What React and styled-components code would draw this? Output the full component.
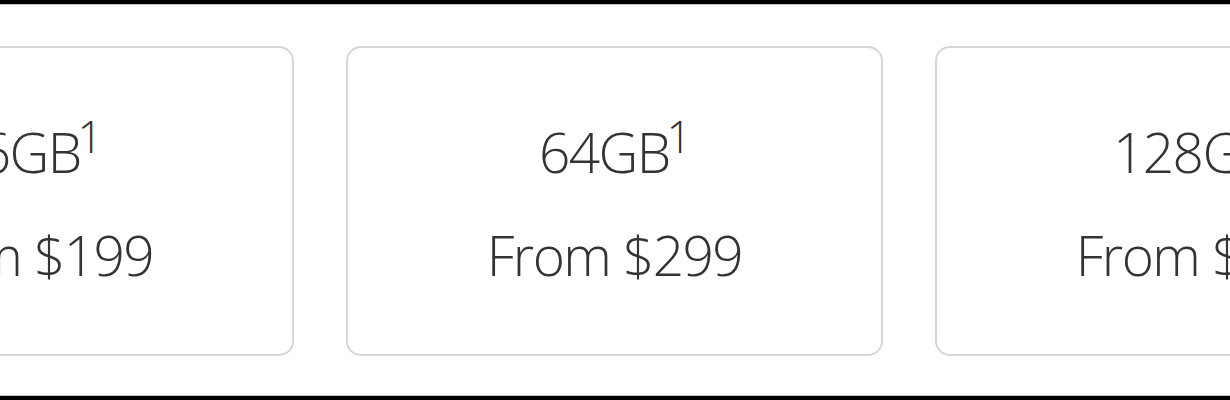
import React from "react";
import styled, { createGlobalStyle } from "styled-components";

const Global = createGlobalStyle`
  html, body { margin: 0; padding: 0; background: #fff; }
  body { width: 1230px; height: 400px; overflow: hidden; }
`;

const Frame = styled.div`
  height: 400px;
  box-sizing: border-box;
  border-top: 4px solid #000;
  border-bottom: 4px solid #000;
  overflow: hidden;
`;

const Inner = styled.div`
  height: 100%;
  box-sizing: border-box;
  border-top: 1px solid #c4c4c4;
  border-bottom: 1px solid #c4c4c4;
  padding-top: 41px;
  overflow: hidden;
`;

const Row = styled.div`
  display: flex;
  gap: 52px;
  margin-left: -243px;
`;

const Card = styled.div`
  flex: 0 0 537px;
  height: 310px;
  box-sizing: border-box;
  border: 2px solid #d6d6d6;
  border-radius: 15px;
  display: flex;
  flex-direction: column;
  align-items: center;
  padding-top: 72px;
  gap: 39px;
  font-family: "Open Sans", "Noto Sans", sans-serif;
  color: #333;
`;

const Line = styled.div`
  font-size: 55px;
  line-height: 64px;
  font-weight: 300;
  letter-spacing: -1.6px;
  white-space: nowrap;
`;

const Sup = styled.sup`
  font-size: 44px;
  line-height: 0;
  vertical-align: 20px;
  margin-left: -3px;
`;

const items = [
  { size: "16GB", price: "$199" },
  { size: "64GB", price: "$299" },
  { size: "128GB", price: "$399" },
];

export default function App() {
  return (
    <>
      <Global />
      <Frame>
        <Inner>
          <Row>
            {items.map((it) => (
              <Card key={it.size}>
                <Line>
                  {it.size}
                  <Sup>1</Sup>
                </Line>
                <Line>From {it.price}</Line>
              </Card>
            ))}
          </Row>
        </Inner>
      </Frame>
    </>
  );
}
